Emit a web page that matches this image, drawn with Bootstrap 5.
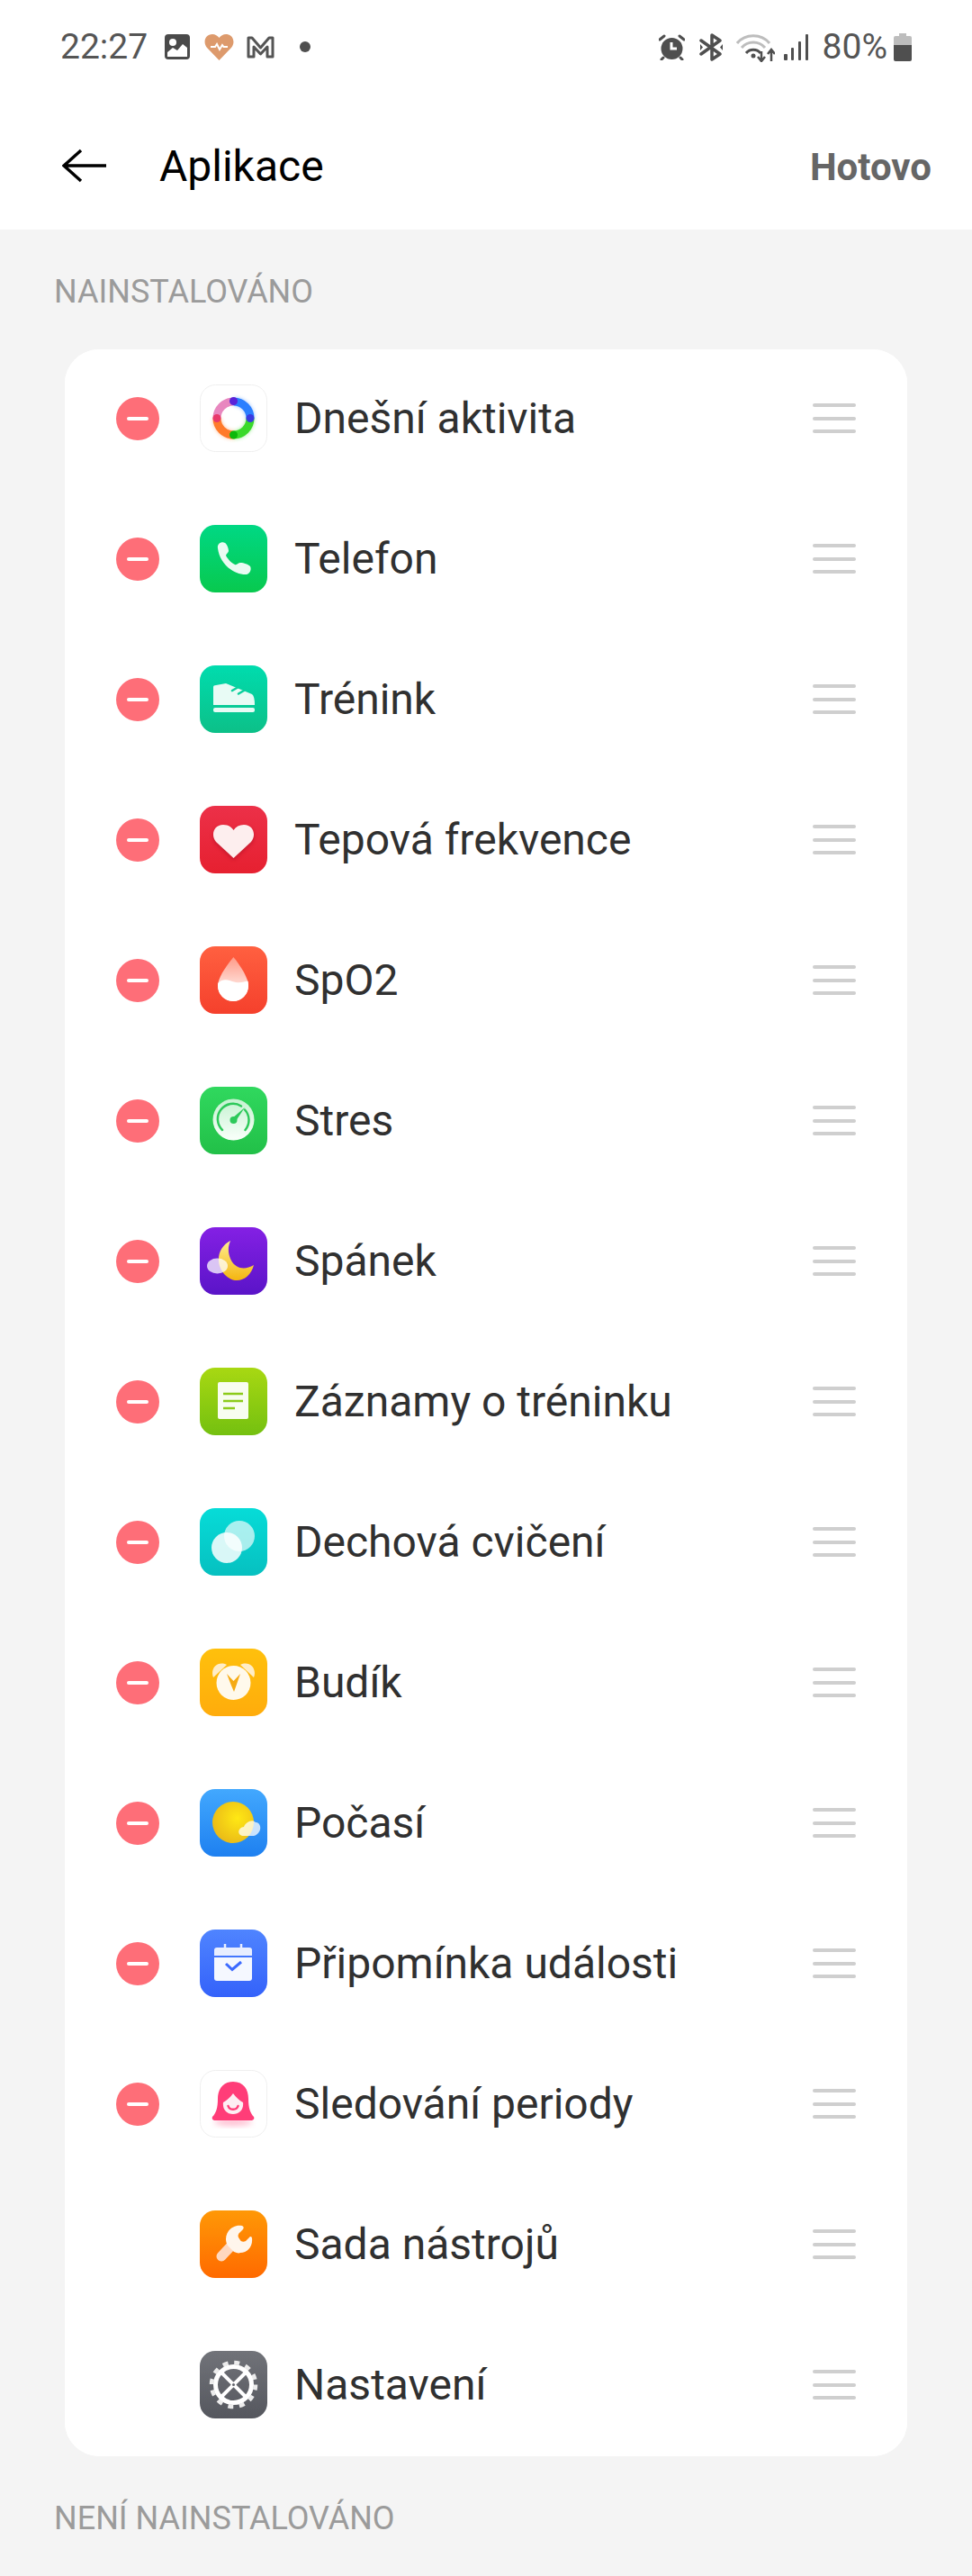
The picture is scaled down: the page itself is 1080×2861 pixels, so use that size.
<!DOCTYPE html>
<html lang="cs">
<head>
    <meta charset="UTF-8">
    <meta name="viewport" content="width=device-width, initial-scale=1.0">
    <title>Aplikace</title>
    <link href="https://cdn.jsdelivr.net/npm/bootstrap@5.3.0/dist/css/bootstrap.min.css" rel="stylesheet">
    <style>
        body {
            background-color: #f4f4f4;
            font-family: Roboto, "Liberation Sans", sans-serif;
        }

        .top-area {
            background-color: #fff;
            height: 255px;
        }

        .status-row {
            height: 104px;
            padding: 0 67px;
            color: #555;
            font-size: 39px;
            line-height: 1;
        }

        .status-left svg { margin-left: 16px; }
        .status-left .first-icon { margin-left: 19px; }
        .status-left .mail-icon { margin-left: 13px; }
        .status-left .dot-icon { margin-left: 27px; }
        .status-right svg { margin-left: 14px; }
        .status-right .alarm-icon { margin-left: 0; }
        .status-right .bt-icon { margin-left: 16px; }
        .status-right .signal-icon { margin-left: 10px; }
        .status-right .pct { margin-left: 16px; }
        .status-right .batt { margin-left: 7px; }

        .title-row {
            height: 151px;
            padding: 8px 45px 0 69px;
        }

        .page-title {
            font-size: 48px;
            color: #000;
            margin-left: 59px;
            margin-bottom: 0;
            padding-top: 3px;
            font-weight: 400;
        }

        .done-btn {
            font-size: 42px;
            font-weight: 700;
            color: #666;
            padding-top: 3px;
        }

        .section-label {
            color: #9b9b9b;
            font-size: 36px;
            line-height: 1;
            padding-left: 60px;
        }

        .label-first {
            padding-top: 51px;
            margin-bottom: 46px;
        }

        .label-second {
            margin-top: 51px;
        }

        .apps-card {
            margin: 0 72px;
            border: 0;
            border-radius: 38px;
            overflow: hidden;
        }

        .app-row {
            height: 156px;
            padding: 0 57px 3px;
            border: 0;
            font-size: 48px;
            color: #303030;
        }

        .minus-slot {
            flex: 0 0 48px;
            height: 48px;
            margin-right: 45px;
        }

        .minus-btn {
            background-color: #fe6e78;
            border-radius: 50%;
        }

        .minus-btn span {
            width: 24px;
            height: 4px;
            background-color: #fff;
            border-radius: 2px;
        }

        .app-icon {
            flex: 0 0 75px;
            width: 75px;
            height: 75px;
            margin-right: 30px;
            display: block;
        }

        .drag-handle {
            flex: 0 0 48px;
            height: 33px;
        }

        .drag-handle span {
            height: 4px;
            background-color: #cfcfcf;
            border-radius: 2px;
        }
    </style>
</head>
<body>
    <div class="top-area">
        <div class="status-row d-flex align-items-center justify-content-between">
            <div class="status-left d-flex align-items-center">
                <span>22:27</span>
                <svg class="first-icon" width="28" height="28" viewBox="0 0 28 28"><rect width="28" height="28" rx="4" fill="#4a4a4a"/><circle cx="9" cy="9" r="4" fill="#fff"/><path d="M3 25 V20 L9 15 L14 18 L20 11 L25 15 V25 Z" fill="#fff"/></svg>
                <svg width="33" height="29" viewBox="0 0 33 29"><path d="M16.5 29 L3 15 C-2 9 1 0 9 0 C12 0 15 2 16.5 4 C18 2 21 0 24 0 C32 0 35 9 30 15 Z" fill="#dd9a6c"/><path d="M7 14 H12 L14 11 L17 17 L20 12 L21.500 14 H26" fill="none" stroke="#fff" stroke-width="2"/></svg>
                <svg class="mail-icon" width="33" height="27" viewBox="0 0 33 27"><path d="M3 24 V3 H7 L16.500 14 L26 3 H30 V24 H24 V13 L16.500 21 L9 13 V24 Z" fill="#fff" stroke="#555" stroke-width="3" stroke-linejoin="round"/></svg>
                <svg class="dot-icon" width="12" height="12" viewBox="0 0 12 12"><circle cx="6" cy="6" r="6" fill="#4f4f4f"/></svg>
            </div>
            <div class="status-right d-flex align-items-center">
                <svg class="alarm-icon" width="29" height="29" viewBox="0 0 29 29"><circle cx="14.500" cy="16" r="12" fill="#4f4f4f"/><path d="M14 9 V16 H20" fill="none" stroke="#fff" stroke-width="3"/><path d="M1 6 L6 2 M28 6 L23 2 M5 26 L3 28 M24 26 L26 28" stroke="#4f4f4f" stroke-width="3" stroke-linecap="round"/></svg>
                <svg class="bt-icon" width="27" height="31" viewBox="0 0 27 31"><path d="M2 8 L23 23 L14 29 V2 L23 8 L2 23" fill="none" stroke="#4f4f4f" stroke-width="3.500" stroke-linejoin="round" stroke-linecap="round"/><path d="M1 12 L4 15.500 L1 19 M26 12 L23 15.500 L26 19" fill="#4f4f4f"/></svg>
                <svg width="43" height="33" viewBox="0 0 43 33"><path d="M1 12 C10 1 28 1 37 12 M6 17 C13 9 25 9 32 17" fill="none" stroke="#bdbdbd" stroke-width="3"/><path d="M11 23 C15 18 23 18 27 23" fill="none" stroke="#4f4f4f" stroke-width="3"/><circle cx="19" cy="26" r="2.500" fill="#4f4f4f"/><path d="M28 21 V31 M24 27 L28 32 L32 27 M39 32 V20 M35 24 L39 19 L43 24" fill="none" stroke="#4f4f4f" stroke-width="2.500"/></svg>
                <svg class="signal-icon" width="27" height="29" viewBox="0 0 27 29"><rect x="0" y="22" width="4" height="7" rx="1" fill="#4f4f4f"/><rect x="8" y="15" width="3" height="14" rx="1" fill="#4f4f4f"/><rect x="16" y="8" width="3" height="21" rx="1" fill="#4f4f4f"/><rect x="24" y="0" width="3" height="29" rx="1" fill="#4f4f4f"/></svg>
                <span class="pct">80%</span>
                <svg class="batt" width="20" height="31" viewBox="0 0 20 31"><path d="M6 0 H14 V3 H18 Q20 3 20 5 V13 H0 V5 Q0 3 2 3 H6 Z" fill="#bdbdbd"/><path d="M0 13 H20 V29 Q20 31 18 31 H2 Q0 31 0 29 Z" fill="#4f4f4f"/></svg>
            </div>
        </div>
        <div class="title-row d-flex align-items-center">
            <svg width="49" height="38" viewBox="0 0 49 38"><path d="M21 2 L2 19 L21 36 M2 19 H49" fill="none" stroke="#000" stroke-width="3.500"/></svg>
            <h1 class="page-title flex-grow-1">Aplikace</h1>
            <span class="done-btn">Hotovo</span>
        </div>
    </div>

    <div class="section-label label-first">NAINSTALOVÁNO</div>

    <div class="card apps-card">
        <ul class="list-group list-group-flush">
            <li class="list-group-item app-row d-flex align-items-center">
                <div class="minus-slot minus-btn d-flex align-items-center justify-content-center"><span></span></div>
                <svg class="app-icon" viewBox="0 0 75 75">
                    <defs><filter id="ringGlow" x="-30%" y="-30%" width="160%" height="160%"><feGaussianBlur stdDeviation="2"/></filter></defs>
                    <rect x="0.500" y="0.500" width="74" height="74" rx="17" fill="#fff" stroke="#efefef"/>
                    <g fill="none" stroke-width="9" filter="url(#ringGlow)" opacity="0.5">
                        <path d="M37.500 19 A18.500 18.500 0 0 1 56 37.500" stroke="#2a7fff"/>
                        <path d="M56 37.500 A18.500 18.500 0 0 1 37.500 56" stroke="#39d92a"/>
                        <path d="M37.500 56 A18.500 18.500 0 0 1 19 37.500" stroke="#ff7a2a"/>
                    </g>
                    <g fill="none" stroke-width="9">
                        <path d="M37.500 19 A18.500 18.500 0 0 1 56 37.500" stroke="#2a7fff"/>
                        <path d="M56 37.500 A18.500 18.500 0 0 1 37.500 56" stroke="#39d92a"/>
                        <path d="M37.500 56 A18.500 18.500 0 0 1 19 37.500" stroke="#ff7a2a"/>
                        <path d="M19 37.500 A18.500 18.500 0 0 1 37.500 19" stroke="#e887bf"/>
                    </g>
                    <circle cx="37.500" cy="18.500" r="4.500" fill="#5a22d8"/>
                    <circle cx="56" cy="37.500" r="4.500" fill="#3a3ae0"/>
                    <circle cx="37.500" cy="56" r="4.500" fill="#0bb80b"/>
                    <circle cx="19" cy="37.500" r="4.500" fill="#e8386a"/>
                </svg>
                <span class="flex-grow-1">Dnešní aktivita</span>
                <div class="drag-handle d-flex flex-column justify-content-between"><span></span><span></span><span></span></div>
            </li>
            <li class="list-group-item app-row d-flex align-items-center">
                <div class="minus-slot minus-btn d-flex align-items-center justify-content-center"><span></span></div>
                <svg class="app-icon" viewBox="0 0 75 75">
                    <defs><linearGradient id="gPhone" x1="0" y1="0" x2="0" y2="1"><stop offset="0" stop-color="#00d884"/><stop offset="1" stop-color="#08c94e"/></linearGradient></defs>
                    <rect width="75" height="75" rx="17" fill="url(#gPhone)"/>
                    <path d="M20 26 C19 21 24 18 28 20 C30 21 32 26 32 29 C32 31 29 32 29 34 C31 38 35 42 39 44 C41 45 43 42 45 42 C49 42 54 44 56 46 C58 50 55 55 51 55 C36 55 22 42 20 26 Z" fill="#eafbf2"/>
                </svg>
                <span class="flex-grow-1">Telefon</span>
                <div class="drag-handle d-flex flex-column justify-content-between"><span></span><span></span><span></span></div>
            </li>
            <li class="list-group-item app-row d-flex align-items-center">
                <div class="minus-slot minus-btn d-flex align-items-center justify-content-center"><span></span></div>
                <svg class="app-icon" viewBox="0 0 75 75">
                    <defs><linearGradient id="gShoe" x1="0" y1="0" x2="0" y2="1"><stop offset="0" stop-color="#00dcae"/><stop offset="1" stop-color="#0cc088"/></linearGradient></defs>
                    <rect width="75" height="75" rx="17" fill="url(#gShoe)"/>
                    <path d="M15 24 Q15 22 18 22 L29 20 L46 27 L58 32 Q61 34 61 44 L15 44 Z" fill="#e8fbf5"/>
                    <path d="M36 28 L42 24.500 M43 31.500 L49 28" stroke="#0ccf9c" stroke-width="2.500" stroke-linecap="round"/>
                    <rect x="15" y="47" width="46" height="5" rx="2" fill="#e8fbf5"/>
                </svg>
                <span class="flex-grow-1">Trénink</span>
                <div class="drag-handle d-flex flex-column justify-content-between"><span></span><span></span><span></span></div>
            </li>
            <li class="list-group-item app-row d-flex align-items-center">
                <div class="minus-slot minus-btn d-flex align-items-center justify-content-center"><span></span></div>
                <svg class="app-icon" viewBox="0 0 75 75">
                    <defs><linearGradient id="gHeart" x1="0" y1="0" x2="0" y2="1"><stop offset="0" stop-color="#ec3048"/><stop offset="1" stop-color="#e62030"/></linearGradient>
                    <filter id="sHeart" x="-30%" y="-30%" width="160%" height="160%"><feGaussianBlur stdDeviation="2"/></filter></defs>
                    <rect width="75" height="75" rx="17" fill="url(#gHeart)"/>
                    <path d="M37.500 60 L18 42 C12 35 15 23 26 23 C31 23 35 25 37.500 29 C40 25 44 23 49 23 C60 23 63 35 57 42 Z" fill="#a01020" opacity="0.5" filter="url(#sHeart)"/>
                    <path d="M37.500 58 L18 40 C12 33 15 21 26 21 C31 21 35 23 37.500 27 C40 23 44 21 49 21 C60 21 63 33 57 40 Z" fill="#fdeeee"/>
                </svg>
                <span class="flex-grow-1">Tepová frekvence</span>
                <div class="drag-handle d-flex flex-column justify-content-between"><span></span><span></span><span></span></div>
            </li>
            <li class="list-group-item app-row d-flex align-items-center">
                <div class="minus-slot minus-btn d-flex align-items-center justify-content-center"><span></span></div>
                <svg class="app-icon" viewBox="0 0 75 75">
                    <defs><linearGradient id="gDrop" x1="0" y1="0" x2="0" y2="1"><stop offset="0" stop-color="#ff6040"/><stop offset="1" stop-color="#f5402c"/></linearGradient>
                    <linearGradient id="gDropIn" x1="0" y1="0" x2="0" y2="1"><stop offset="0" stop-color="#ff9a88"/><stop offset="0.7" stop-color="#ffe4de"/></linearGradient></defs>
                    <rect width="75" height="75" rx="17" fill="url(#gDrop)"/>
                    <path d="M37.500 12 C37.500 12 20 32 20 44 A17 17 0 0 0 54 44 C54 32 37.500 12 37.500 12 Z" fill="url(#gDropIn)"/>
                    <path d="M20.200 41 C27 34 34 39 40 40 C46 41 50 39 53.500 38.500 Q54 41 54 44 A17 17 0 0 1 20 44 Q20 42 20.200 41 Z" fill="#fff"/>
                </svg>
                <span class="flex-grow-1">SpO2</span>
                <div class="drag-handle d-flex flex-column justify-content-between"><span></span><span></span><span></span></div>
            </li>
            <li class="list-group-item app-row d-flex align-items-center">
                <div class="minus-slot minus-btn d-flex align-items-center justify-content-center"><span></span></div>
                <svg class="app-icon" viewBox="0 0 75 75">
                    <defs><linearGradient id="gStress" x1="0" y1="0" x2="0" y2="1"><stop offset="0" stop-color="#30d85e"/><stop offset="1" stop-color="#22c048"/></linearGradient>
                    <linearGradient id="gStressIn" x1="0" y1="0" x2="0" y2="1"><stop offset="0" stop-color="#c4f2d0"/><stop offset="1" stop-color="#fafffb"/></linearGradient></defs>
                    <rect width="75" height="75" rx="17" fill="url(#gStress)"/>
                    <circle cx="37.500" cy="36.500" r="23" fill="url(#gStressIn)"/>
                    <path d="M25 48 A17 17 0 0 1 46 21.500 M50 25.500 A17 17 0 0 1 50.500 48" fill="none" stroke="#2dc95a" stroke-width="2.500" stroke-linecap="round"/>
                    <path d="M36 35 L50 23 L40 38 Z" fill="#2dc95a"/>
                    <circle cx="37.500" cy="37" r="4" fill="#2dc95a"/>
                </svg>
                <span class="flex-grow-1">Stres</span>
                <div class="drag-handle d-flex flex-column justify-content-between"><span></span><span></span><span></span></div>
            </li>
            <li class="list-group-item app-row d-flex align-items-center">
                <div class="minus-slot minus-btn d-flex align-items-center justify-content-center"><span></span></div>
                <svg class="app-icon" viewBox="0 0 75 75">
                    <defs><linearGradient id="gMoon" x1="0" y1="0" x2="0" y2="1"><stop offset="0" stop-color="#8420e4"/><stop offset="1" stop-color="#5a14c8"/></linearGradient>
                    <linearGradient id="gMoonIn" x1="0" y1="0" x2="0" y2="1"><stop offset="0" stop-color="#ffee90"/><stop offset="1" stop-color="#f4b510"/></linearGradient></defs>
                    <rect width="75" height="75" rx="17" fill="url(#gMoon)"/>
                    <path d="M34 15 C20 22 16 40 28 53 C40 65 56 58 60 42 C50 48 40 46 35 37 C31 29 31 22 34 15 Z" fill="url(#gMoonIn)"/>
                    <ellipse cx="19.500" cy="43" rx="11.500" ry="8.500" fill="#fff" opacity="0.75"/>
                </svg>
                <span class="flex-grow-1">Spánek</span>
                <div class="drag-handle d-flex flex-column justify-content-between"><span></span><span></span><span></span></div>
            </li>
            <li class="list-group-item app-row d-flex align-items-center">
                <div class="minus-slot minus-btn d-flex align-items-center justify-content-center"><span></span></div>
                <svg class="app-icon" viewBox="0 0 75 75">
                    <defs><linearGradient id="gNote" x1="0" y1="0" x2="0" y2="1"><stop offset="0" stop-color="#a8d812"/><stop offset="1" stop-color="#74c010"/></linearGradient></defs>
                    <rect width="75" height="75" rx="17" fill="url(#gNote)"/>
                    <rect x="20" y="16" width="34" height="41" rx="2" fill="#f8fdf0"/>
                    <path d="M26 29 H48 M26 37 H48 M26 45 H39" stroke="#8ccb1a" stroke-width="2.500"/>
                </svg>
                <span class="flex-grow-1">Záznamy o tréninku</span>
                <div class="drag-handle d-flex flex-column justify-content-between"><span></span><span></span><span></span></div>
            </li>
            <li class="list-group-item app-row d-flex align-items-center">
                <div class="minus-slot minus-btn d-flex align-items-center justify-content-center"><span></span></div>
                <svg class="app-icon" viewBox="0 0 75 75">
                    <defs><linearGradient id="gBreath" x1="0" y1="0" x2="0" y2="1"><stop offset="0" stop-color="#06dcd8"/><stop offset="1" stop-color="#06c0c0"/></linearGradient></defs>
                    <rect width="75" height="75" rx="17" fill="url(#gBreath)"/>
                    <circle cx="44" cy="31" r="17" fill="#fff" opacity="0.65"/>
                    <circle cx="30" cy="44" r="17" fill="#fff" opacity="0.85"/>
                </svg>
                <span class="flex-grow-1">Dechová cvičení</span>
                <div class="drag-handle d-flex flex-column justify-content-between"><span></span><span></span><span></span></div>
            </li>
            <li class="list-group-item app-row d-flex align-items-center">
                <div class="minus-slot minus-btn d-flex align-items-center justify-content-center"><span></span></div>
                <svg class="app-icon" viewBox="0 0 75 75">
                    <defs><linearGradient id="gAlarm" x1="0" y1="0" x2="0" y2="1"><stop offset="0" stop-color="#ffc00c"/><stop offset="1" stop-color="#ffac0c"/></linearGradient></defs>
                    <rect width="75" height="75" rx="17" fill="url(#gAlarm)"/>
                    <path d="M15 32 C11 22 20 13 30 18 Z M60 32 C64 22 55 13 45 18 Z" fill="#ffedc8"/>
                    <circle cx="37.500" cy="38" r="19" fill="#fff9ec"/>
                    <path d="M30 28 L37.500 36 L45 28 L40.500 41 L38 48 L35 41 Z" fill="#f5aa14"/>
                </svg>
                <span class="flex-grow-1">Budík</span>
                <div class="drag-handle d-flex flex-column justify-content-between"><span></span><span></span><span></span></div>
            </li>
            <li class="list-group-item app-row d-flex align-items-center">
                <div class="minus-slot minus-btn d-flex align-items-center justify-content-center"><span></span></div>
                <svg class="app-icon" viewBox="0 0 75 75">
                    <defs><linearGradient id="gSky" x1="0" y1="0" x2="0" y2="1"><stop offset="0" stop-color="#42a8fe"/><stop offset="1" stop-color="#1e80f0"/></linearGradient>
                    <radialGradient id="gSun" cx="0.6" cy="0.4" r="0.7"><stop offset="0" stop-color="#ffe814"/><stop offset="1" stop-color="#e8b618"/></radialGradient></defs>
                    <rect width="75" height="75" rx="17" fill="url(#gSky)"/>
                    <circle cx="37" cy="37" r="23" fill="url(#gSun)"/>
                    <path d="M49 52 C44 52 42 48 44 45 C45 43 47 42 49 42 C51 37 58 33 62 37 C66 37 68 41 67 45 C66 49 62 52 60 52 Z" fill="#fff" opacity="0.75"/>
                </svg>
                <span class="flex-grow-1">Počasí</span>
                <div class="drag-handle d-flex flex-column justify-content-between"><span></span><span></span><span></span></div>
            </li>
            <li class="list-group-item app-row d-flex align-items-center">
                <div class="minus-slot minus-btn d-flex align-items-center justify-content-center"><span></span></div>
                <svg class="app-icon" viewBox="0 0 75 75">
                    <defs><linearGradient id="gCal" x1="0" y1="0" x2="0" y2="1"><stop offset="0" stop-color="#4f84ff"/><stop offset="1" stop-color="#3462fa"/></linearGradient></defs>
                    <rect width="75" height="75" rx="17" fill="url(#gCal)"/>
                    <path d="M16 29 V23 Q16 20 19 20 H55 Q58 20 58 23 V29 Z" fill="#e8eeff"/>
                    <path d="M28 16 V22 M46 16 V22" stroke="#e8eeff" stroke-width="2.500"/>
                    <path d="M16 31 H58 V54 Q58 57 55 57 H19 Q16 57 16 54 Z" fill="#f5f8ff"/>
                    <path d="M29 38 L36 44.500 L46 36" fill="none" stroke="#3d6bff" stroke-width="3"/>
                </svg>
                <span class="flex-grow-1">Připomínka události</span>
                <div class="drag-handle d-flex flex-column justify-content-between"><span></span><span></span><span></span></div>
            </li>
            <li class="list-group-item app-row d-flex align-items-center">
                <div class="minus-slot minus-btn d-flex align-items-center justify-content-center"><span></span></div>
                <svg class="app-icon" viewBox="0 0 75 75">
                    <defs><filter id="sGirl" x="-30%" y="-30%" width="160%" height="160%"><feGaussianBlur stdDeviation="3"/></filter></defs>
                    <rect x="0.500" y="0.500" width="74" height="74" rx="17" fill="#fff" stroke="#efefef"/>
                    <ellipse cx="37" cy="58" rx="21" ry="4" fill="#ff6d98" opacity="0.45" filter="url(#sGirl)"/>
                    <path d="M37 13 C25 13 20 22 20 32 C20 42 18 48 14 52 C13 55 15 56 18 56 L56 56 C60 56 61 54 60 52 C56 48 54 42 54 32 C54 22 49 13 37 13 Z" fill="#ff3d78"/>
                    <path d="M26 36 C30 34 34 30 37 26 C40 30 44 34 48 36 C49 44 44 49 37 49 C30 49 25 44 26 36 Z" fill="#fdeff3"/>
                    <path d="M31.500 40 C33 45 41 45 42.500 40" fill="none" stroke="#ff3d78" stroke-width="2.500" stroke-linecap="round"/>
                </svg>
                <span class="flex-grow-1">Sledování periody</span>
                <div class="drag-handle d-flex flex-column justify-content-between"><span></span><span></span><span></span></div>
            </li>
            <li class="list-group-item app-row d-flex align-items-center">
                <div class="minus-slot"></div>
                <svg class="app-icon" viewBox="0 0 75 75">
                    <defs><linearGradient id="gTool" x1="0" y1="0" x2="0" y2="1"><stop offset="0" stop-color="#ff9806"/><stop offset="1" stop-color="#ff6a00"/></linearGradient></defs>
                    <rect width="75" height="75" rx="17" fill="url(#gTool)"/>
                    <path d="M24 51 L38 36" stroke="#ffd8bf" stroke-width="11" stroke-linecap="round"/>
                    <path d="M47 17 C38 15 29 22 29 32 C29 35 30 37 31 39 L38 46 C41 47 43 48 45 47 C53 47 59 40 58 31 C58 29 56 28 55 30 L51 34 C49 35 46 35 45 33 L43 30 C42 28 43 26 44 25 L48 21 C49 19 49 18 47 17 Z" fill="#fff5ec"/>
                </svg>
                <span class="flex-grow-1">Sada nástrojů</span>
                <div class="drag-handle d-flex flex-column justify-content-between"><span></span><span></span><span></span></div>
            </li>
            <li class="list-group-item app-row d-flex align-items-center">
                <div class="minus-slot"></div>
                <svg class="app-icon" viewBox="0 0 75 75">
                    <defs><linearGradient id="gGear" x1="0" y1="0" x2="0" y2="1"><stop offset="0" stop-color="#717379"/><stop offset="1" stop-color="#55575e"/></linearGradient></defs>
                    <rect width="75" height="75" rx="17" fill="url(#gGear)"/>
                    <circle cx="37.500" cy="37.500" r="24.500" fill="none" stroke="#ececec" stroke-width="4.500" stroke-dasharray="6 6.830"/>
                    <circle cx="37.500" cy="37.500" r="20" fill="none" stroke="#fff" stroke-width="5"/>
                    <path d="M23.500 23.500 L51.500 51.500 M51.500 23.500 L23.500 51.500" stroke="#fff" stroke-width="4"/>
                    <circle cx="37.500" cy="37.500" r="1.500" fill="#5f6168"/>
                </svg>
                <span class="flex-grow-1">Nastavení</span>
                <div class="drag-handle d-flex flex-column justify-content-between"><span></span><span></span><span></span></div>
            </li>
        </ul>
    </div>

    <div class="section-label label-second">NENÍ NAINSTALOVÁNO</div>

    <script src="https://cdn.jsdelivr.net/npm/bootstrap@5.3.0/dist/js/bootstrap.bundle.min.js"></script>
</body>
</html>
